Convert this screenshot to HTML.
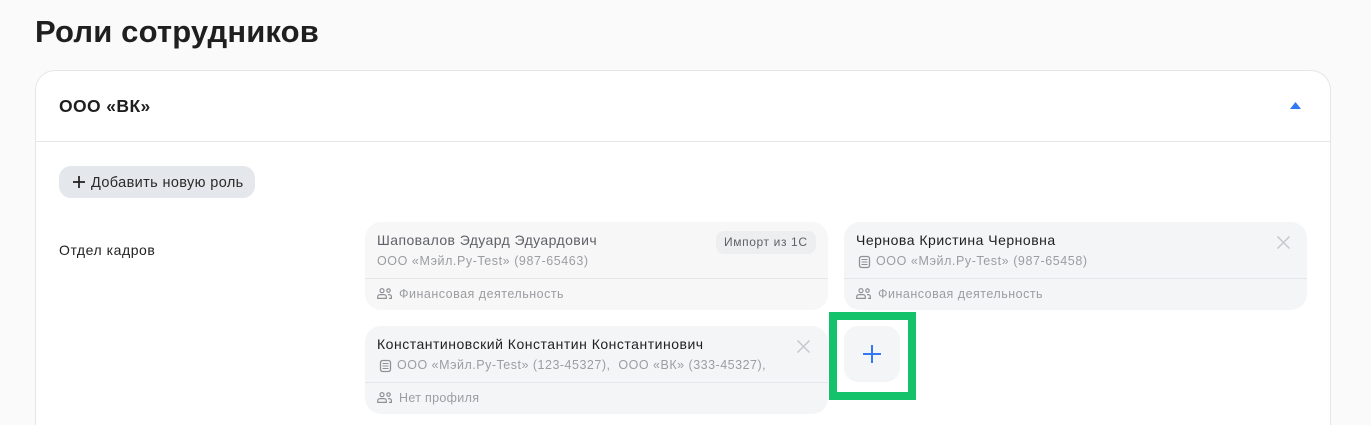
<!DOCTYPE html>
<html lang="ru">
<head>
<meta charset="utf-8">
<title>Роли сотрудников</title>
<style>
html,body{margin:0;padding:0;width:1371px;height:425px;overflow:hidden;}
body{background:#fafafa;position:relative;font-family:"Liberation Sans",sans-serif;color:#1f1f1f;}
.a{position:absolute;white-space:nowrap;}
.panel{left:35px;top:70px;width:1294px;height:354px;background:#fff;border:1px solid #e4e6ea;border-bottom:0;border-radius:20px 20px 0 0;}
.hr{left:36px;top:141px;width:1294px;height:1px;background:#e4e6ea;}
.card{width:463px;height:88px;border-radius:16px;background:#f4f5f7;}
.card.off{background:#f7f7f8;}
.card .line{position:absolute;left:0;right:0;top:56px;height:1px;background:#e5e6e9;}
.name{left:12px;top:10px;font-size:14px;line-height:17px;letter-spacing:.46px;color:#1f1f1f;}
.off .name{color:#5f6166;}
.sub{top:32px;font-size:12.5px;line-height:15px;letter-spacing:.57px;color:#9b9da1;}
.prof{left:34px;top:65px;font-size:12.5px;line-height:15px;letter-spacing:.5px;color:#9b9da1;}
svg{position:absolute;display:block;overflow:visible;}
</style>
</head>
<body>
<div class="a" style="left:35px;top:13px;font-size:31px;line-height:38px;font-weight:700;letter-spacing:.15px;color:#1f1f1f;">Роли сотрудников</div>
<div class="a panel"></div>
<div class="a hr"></div>
<div class="a" style="left:59px;top:96px;font-size:17.5px;line-height:20px;font-weight:700;letter-spacing:.4px;color:#1f1f1f;">ООО «ВК»</div>
<svg style="left:1290px;top:102px" width="11" height="7" viewBox="0 0 11 7"><path d="M5.5 0L11 7H0z" fill="#2f78f6"/></svg>

<div class="a" style="left:59px;top:166px;width:196px;height:32px;border-radius:12px;background:#e4e7ec;"></div>
<svg style="left:73px;top:176px" width="12" height="12" viewBox="0 0 12 12"><path d="M6 0V12M0 6H12" stroke="#1f1f1f" stroke-width="1.7"/></svg>
<div class="a" style="left:91px;top:175px;font-size:14.5px;line-height:17px;letter-spacing:.37px;color:#2a2a2a;">Добавить новую роль</div>

<div class="a" style="left:59px;top:242px;font-size:14px;line-height:17px;letter-spacing:.55px;color:#1f1f1f;">Отдел кадров</div>

<div class="a card off" style="left:365px;top:222px;">
  <div class="a name" style="letter-spacing:.42px;">Шаповалов Эдуард Эдуардович</div>
  <div class="a sub" style="left:12px;">ООО «Мэйл.Ру-Test» (987-65463)</div>
  <div class="a" style="left:351px;top:9px;width:100px;height:23px;border-radius:8px;background:#eceef0;"></div>
  <div class="a" style="left:359px;top:13px;font-size:12px;line-height:15px;letter-spacing:.62px;color:#5f6166;">Импорт из 1С</div>
  <div class="line"></div>
  <svg style="left:12px;top:66px" width="15" height="11" viewBox="0 0 15 11" fill="none" stroke="#8f9195" stroke-width="1.2"><circle cx="5" cy="2.600" r="2"/><path d="M.7 10.400V8.800C.7 7.500 1.700 6.600 3 6.600h4c1.300 0 2.300.9 2.300 2.200v1.600H.7z"/><circle cx="11.500" cy="2.600" r="1.700"/><path d="M11 6.600h1.300c1.200 0 2.100.9 2.100 2.100v1.700h-2.400"/></svg>
  <div class="a prof">Финансовая деятельность</div>
</div>

<div class="a card" style="left:844px;top:222px;">
  <div class="a name" style="letter-spacing:.5px;">Чернова Кристина Черновна</div>
  <svg style="left:14.500px;top:34px" width="11" height="12" viewBox="0 0 11 12" fill="none" stroke="#8f9195" stroke-width="1.300"><rect x=".5" y=".5" width="10" height="11" rx="2.200"/><path d="M2.500 3.500h6M2.500 6h6M2.500 8.500h6" stroke-width="1"/></svg>
  <div class="a sub" style="left:32px;">ООО «Мэйл.Ру-Test» (987-65458)</div>
  <svg style="left:433px;top:14px" width="13" height="13" viewBox="0 0 13 13"><path d="M.5.500L12.500 12.500M12.500.500L.5 12.500" stroke="#c6c8cc" stroke-width="1.500"/></svg>
  <div class="line"></div>
  <svg style="left:12px;top:66px" width="15" height="11" viewBox="0 0 15 11" fill="none" stroke="#8f9195" stroke-width="1.2"><circle cx="5" cy="2.600" r="2"/><path d="M.7 10.400V8.800C.7 7.500 1.700 6.600 3 6.600h4c1.300 0 2.300.9 2.300 2.200v1.600H.7z"/><circle cx="11.500" cy="2.600" r="1.700"/><path d="M11 6.600h1.300c1.200 0 2.100.9 2.100 2.100v1.700h-2.400"/></svg>
  <div class="a prof">Финансовая деятельность</div>
</div>

<div class="a card" style="left:365px;top:326px;">
  <div class="a name" style="letter-spacing:.51px;">Константиновский Константин Константинович</div>
  <svg style="left:14.500px;top:34px" width="11" height="12" viewBox="0 0 11 12" fill="none" stroke="#8f9195" stroke-width="1.300"><rect x=".5" y=".5" width="10" height="11" rx="2.200"/><path d="M2.500 3.500h6M2.500 6h6M2.500 8.500h6" stroke-width="1"/></svg>
  <div class="a sub" style="left:32px;letter-spacing:.5px;">ООО «Мэйл.Ру-Test» (123-45327),&nbsp; ООО «ВК» (333-45327),</div>
  <svg style="left:432px;top:14px" width="13" height="13" viewBox="0 0 13 13"><path d="M.5.500L12.500 12.500M12.500.500L.5 12.500" stroke="#c6c8cc" stroke-width="1.500"/></svg>
  <div class="line"></div>
  <svg style="left:12px;top:66px" width="15" height="11" viewBox="0 0 15 11" fill="none" stroke="#8f9195" stroke-width="1.2"><circle cx="5" cy="2.600" r="2"/><path d="M.7 10.400V8.800C.7 7.500 1.700 6.600 3 6.600h4c1.300 0 2.300.9 2.300 2.200v1.600H.7z"/><circle cx="11.500" cy="2.600" r="1.700"/><path d="M11 6.600h1.300c1.200 0 2.100.9 2.100 2.100v1.700h-2.400"/></svg>
  <div class="a prof" style="letter-spacing:.32px;">Нет профиля</div>
</div>

<div class="a" style="left:844px;top:326px;width:56px;height:56px;border-radius:14px;background:#f4f5f7;"></div>
<svg style="left:863px;top:345px" width="18" height="18" viewBox="0 0 18 18"><path d="M9 0V18M0 9H18" stroke="#3477f5" stroke-width="2"/></svg>
<div class="a" style="left:829px;top:312px;width:71px;height:72px;border:8px solid #14c26b;"></div>
</body>
</html>
